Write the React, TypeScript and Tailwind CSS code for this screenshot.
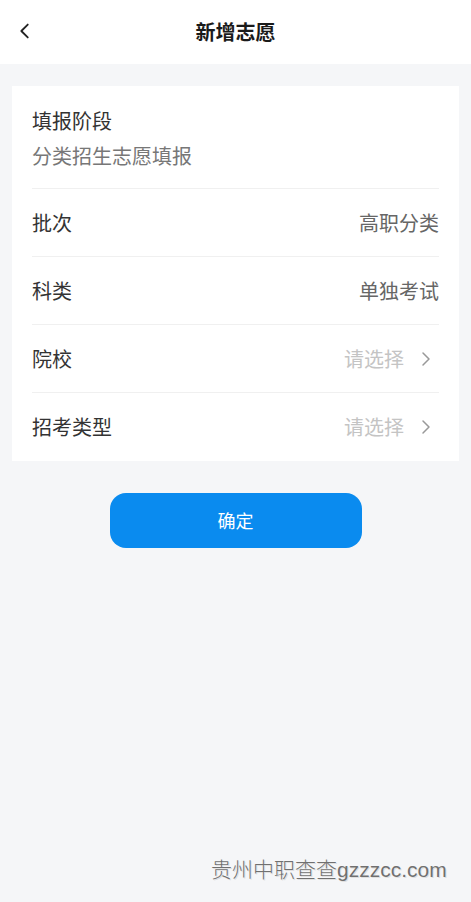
import React from 'react';

const rows = [
  { label: '批次', value: '高职分类', select: false },
  { label: '科类', value: '单独考试', select: false },
  { label: '院校', value: '请选择', select: true },
  { label: '招考类型', value: '请选择', select: true },
];

const Chevron: React.FC<{ left?: boolean; className?: string }> = ({ left, className }) => (
  <svg viewBox="0 0 24 24" className={className} fill="none" stroke="currentColor" strokeWidth={2} strokeLinecap="round" strokeLinejoin="round">
    {left ? <path d="M15 5l-7 7 7 7" /> : <path d="M8 4l8 8-8 8" />}
  </svg>
);

const App: React.FC = () => {
  return (
    <div
      className="w-[471px] h-[902px] bg-[#f5f6f8] relative overflow-hidden flex flex-col"
      style={{ fontFamily: '"Noto Sans CJK SC", "Noto Sans", sans-serif' }}
    >
      {/* Header */}
      <div className="h-[64px] bg-white flex items-center relative shrink-0">
        <button className="absolute left-[14px] top-[20px] text-[#222]">
          <Chevron left className="w-[22px] h-[22px]" />
        </button>
        <h1 className="w-full text-center text-[20px] font-bold text-[#1a1a1a] leading-none">新增志愿</h1>
      </div>

      {/* Form card */}
      <div className="mx-[12px] mt-[22px] bg-white px-[20px]">
        <div className="pt-[21px] pb-[18px] border-b border-[#f0f0f0]">
          <div className="text-[20px] leading-[28px] text-[#333]">填报阶段</div>
          <div className="text-[20px] leading-[28px] mt-[7px] text-[#777]">分类招生志愿填报</div>
        </div>
        {rows.map((row, idx) => (
          <div
            key={idx}
            className={`h-[68px] flex items-center justify-between ${idx < rows.length - 1 ? 'border-b border-[#f0f0f0]' : ''}`}
          >
            <span className="text-[20px] text-[#333]">{row.label}</span>
            {row.select ? (
              <span className="flex items-center text-[20px] text-[#c4c4c4]">
                {row.value}
                <Chevron className="w-[18px] h-[18px] ml-[13px] mr-[4px] text-[#999]" />
              </span>
            ) : (
              <span className="text-[20px] text-[#666]">{row.value}</span>
            )}
          </div>
        ))}
      </div>

      {/* Submit */}
      <div className="flex justify-center mt-[32px]">
        <button className="w-[252px] h-[55px] rounded-[16px] bg-[#0a8bef] text-white text-[18px]">确定</button>
      </div>

      {/* Watermark */}
      <div
        className="absolute left-[211px] top-[853px] text-[21px] font-light text-[#707070] whitespace-nowrap"
        style={{ textShadow: '0 0 1px #fff, 1px 1px 0 #ddd' }}
      >
        贵州中职查查<span style={{ fontFamily: '"Liberation Sans", sans-serif' }}>gzzzcc.com</span>
      </div>
    </div>
  );
};

export default App;
